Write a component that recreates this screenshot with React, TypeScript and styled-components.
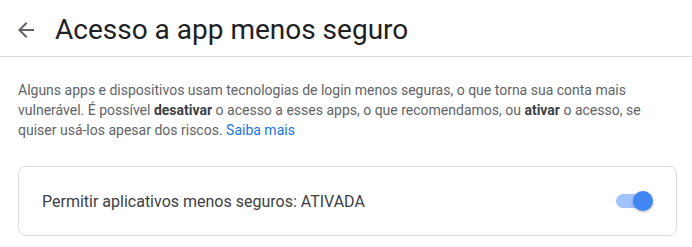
import React from "react";
import styled, { createGlobalStyle } from "styled-components";

const Global = createGlobalStyle`
  html, body { margin: 0; padding: 0; background: #fff; }
  body { font-family: Roboto, "Noto Sans", Arial, sans-serif; }
`;

const Page = styled.div`
  width: 692px;
  display: flex;
  flex-direction: column;
`;

const Header = styled.header`
  height: 57px;
  display: flex;
  align-items: center;
  gap: 21px;
  padding: 3px 0 0 18px;
  box-sizing: border-box;
  border-bottom: 1px solid #dadce0;
`;

const BackButton = styled.button`
  border: 0;
  background: none;
  padding: 0;
  width: 16px;
  height: 16px;
  display: flex;
  color: #5f6368;
  cursor: pointer;
`;

const Title = styled.h1`
  margin: 0;
  font-family: Roboto, Arial, sans-serif;
  font-weight: 400;
  font-size: 28px;
  letter-spacing: 0;
  color: #202124;
`;

const Content = styled.main`
  padding: 23px 15px 0 18px;
  display: flex;
  flex-direction: column;
  gap: 26px;
`;

const Intro = styled.p`
  margin: 0;
  font-size: 14px;
  line-height: 20px;
  color: #5f6368;
  padding-right: 12px;
`;

const Strong = styled.b`
  font-weight: 700;
  color: #3c4043;
`;

const Link = styled.a`
  color: #1a73e8;
  text-decoration: none;
`;

const Card = styled.section`
  height: 70px;
  box-sizing: border-box;
  border: 1px solid #dadce0;
  border-radius: 8px;
  display: flex;
  align-items: center;
  justify-content: space-between;
  padding: 0 23px 0 23px;
`;

const Label = styled.span`
  font-size: 16px;
  color: #3c4043;
`;

const Switch = styled.span`
  position: relative;
  width: 37px;
  height: 20px;
  display: block;
`;

const Track = styled.span<{ $on: boolean }>`
  position: absolute;
  left: 0;
  top: 3px;
  width: 34px;
  height: 14px;
  border-radius: 7px;
  background: ${(p) => (p.$on ? "#a1c2fa" : "#bdc1c6")};
`;

const Knob = styled.span<{ $on: boolean }>`
  position: absolute;
  top: 0;
  left: ${(p) => (p.$on ? "17px" : "0")};
  width: 20px;
  height: 20px;
  border-radius: 50%;
  background: ${(p) => (p.$on ? "#4285f4" : "#fff")};
  box-shadow: 0 1px 3px rgba(0, 0, 0, 0.3);
`;

export default function App() {
  const on = true;
  return (
    <Page>
      <Global />
      <Header>
        <BackButton aria-label="Voltar">
          <svg width="16" height="16" viewBox="0 0 16 16" fill="currentColor">
            <path d="M16 7H3.83l5.59-5.59L8 0 0 8l8 8 1.41-1.41L3.83 9H16z" />
          </svg>
        </BackButton>
        <Title>Acesso a app menos seguro</Title>
      </Header>
      <Content>
        <Intro>
          Alguns apps e dispositivos usam tecnologias de login menos seguras, o que torna sua conta mais
          vulnerável. É possível <Strong>desativar</Strong> o acesso a esses apps, o que recomendamos, ou{" "}
          <Strong>ativar</Strong> o acesso, se quiser usá-los apesar dos riscos. <Link href="#">Saiba mais</Link>
        </Intro>
        <Card>
          <Label>Permitir aplicativos menos seguros: ATIVADA</Label>
          <Switch role="switch" aria-checked={on}>
            <Track $on={on} />
            <Knob $on={on} />
          </Switch>
        </Card>
      </Content>
    </Page>
  );
}
